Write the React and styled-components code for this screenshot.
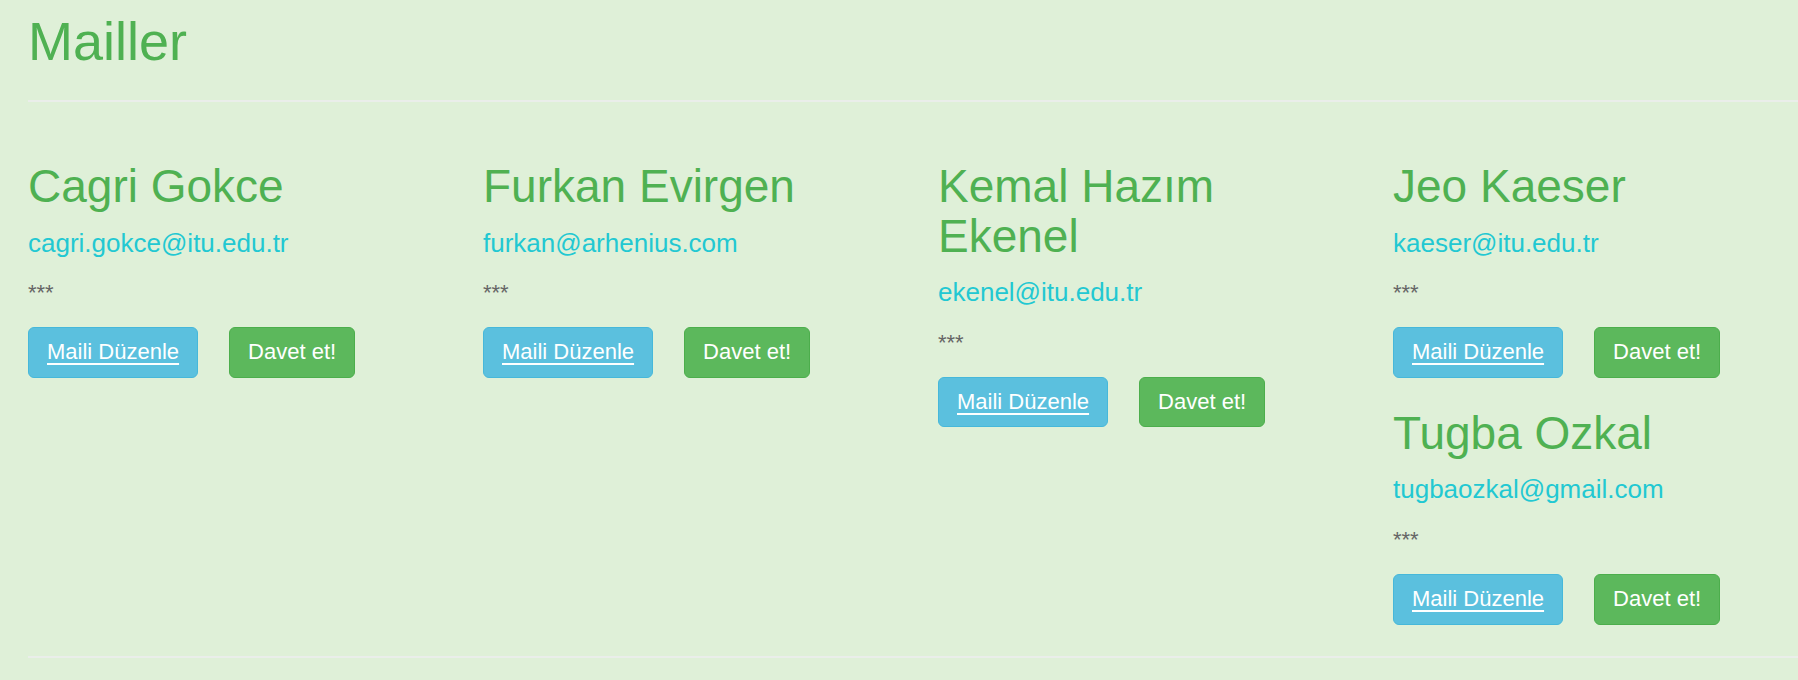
import React from "react";
import styled, { createGlobalStyle } from "styled-components";

const GlobalStyle = createGlobalStyle`
  html, body {
    margin: 0;
    padding: 0;
    background: #dff0d8;
    overflow: hidden;
  }
  body {
    font-family: "Liberation Sans", Arial, Helvetica, sans-serif;
    font-size: 22px;
    line-height: 30px;
    color: #333;
  }
  * { box-sizing: border-box; }
`;

const Page = styled.div`
  padding: 12px 0 0 28px;
  width: 100%;
`;

const Title = styled.h1`
  margin: 0;
  font-size: 54px;
  line-height: 1.1;
  font-weight: 400;
  color: #4fb152;
`;

const Divider = styled.hr`
  border: 0;
  border-top: 2px solid #eaeeea;
  height: 0;
  margin: ${(p) => p.$top}px 0 ${(p) => p.$bottom}px 0;
`;

const Grid = styled.div`
  display: grid;
  grid-template-columns: repeat(4, 410px);
  column-gap: 45px;
  align-items: start;
`;

const Column = styled.div`
  display: flex;
  flex-direction: column;
  gap: 31px;
`;

const Card = styled.div`
  display: flex;
  flex-direction: column;
`;

const Name = styled.h2`
  margin: 0;
  font-size: 46px;
  line-height: 49.5px;
  font-weight: 400;
  color: #4fb152;
`;

const Email = styled.div`
  margin-top: 17px;
  font-size: 26px;
  line-height: 28.6px;
  color: #22c8d2;
`;

const Stars = styled.p`
  margin: 21px 0 0 0;
  font-size: 22px;
  line-height: 30px;
  color: #666;
`;

const Actions = styled.div`
  display: flex;
  gap: 31px;
  margin-top: 19px;
`;

const Button = styled.a`
  display: inline-block;
  padding: 9px 18px;
  font-size: 22px;
  line-height: 30.5px;
  border-radius: 6px;
  border: 1px solid ${(p) => (p.$variant === "info" ? "#46b8da" : "#4cae4c")};
  background: ${(p) => (p.$variant === "info" ? "#5bc0de" : "#5cb85c")};
  color: #fff;
  text-decoration: ${(p) => (p.$variant === "info" ? "underline" : "none")};
  text-underline-offset: 4px;
  text-decoration-thickness: 2px;
  white-space: nowrap;
  cursor: pointer;
`;

const columns = [
  [{ name: "Cagri Gokce", email: "cagri.gokce@itu.edu.tr" }],
  [{ name: "Furkan Evirgen", email: "furkan@arhenius.com" }],
  [{ name: "Kemal Hazım Ekenel", email: "ekenel@itu.edu.tr" }],
  [
    { name: "Jeo Kaeser", email: "kaeser@itu.edu.tr" },
    { name: "Tugba Ozkal", email: "tugbaozkal@gmail.com" },
  ],
];

function Person({ name, email }) {
  return (
    <Card>
      <Name>{name}</Name>
      <Email>{email}</Email>
      <Stars>***</Stars>
      <Actions>
        <Button $variant="info">Maili Düzenle</Button>
        <Button $variant="success">Davet et!</Button>
      </Actions>
    </Card>
  );
}

export default function App() {
  return (
    <>
      <GlobalStyle />
      <Page>
        <Title>Mailler</Title>
        <Divider $top={29} $bottom={60} />
        <Grid>
          {columns.map((col, i) => (
            <Column key={i}>
              {col.map((p) => (
                <Person key={p.email} {...p} />
              ))}
            </Column>
          ))}
        </Grid>
        <Divider $top={31} $bottom={30} />
      </Page>
    </>
  );
}
